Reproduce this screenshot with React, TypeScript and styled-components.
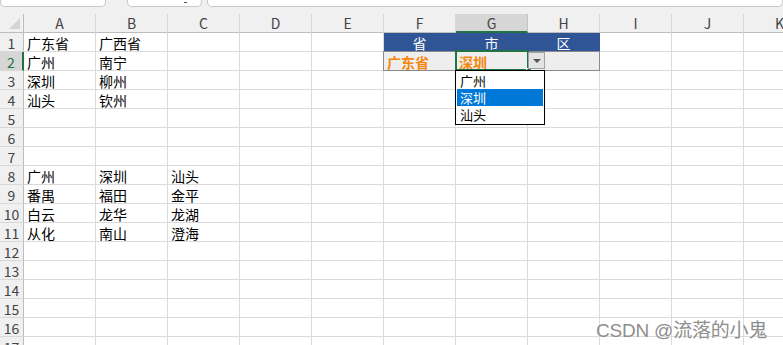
import React from 'react'
import styled, { createGlobalStyle } from 'styled-components'

const GlobalStyle = createGlobalStyle`
  html, body {
    margin: 0;
    padding: 0;
    background: #ffffff;
    overflow: hidden;
  }
  body {
    font-family: "Noto Sans CJK SC", "Noto Sans", sans-serif;
  }
`

const GREEN = '#217346'
const GRID = '#dadada'

const Page = styled.div`
  position: relative;
  width: 783px;
  height: 345px;
  overflow: hidden;
  display: flex;
  flex-direction: column;
`

const TopStrip = styled.div`
  height: 14px;
  flex: none;
  display: flex;
  align-items: flex-start;
  background: #f0f0f0;
`

const StripBox = styled.div<{ $w?: number; $ml?: number }>`
  height: 6px;
  width: ${p => (p.$w ? `${p.$w}px` : 'auto')};
  flex: ${p => (p.$w ? 'none' : '1')};
  margin-left: ${p => p.$ml || 0}px;
  background: #ffffff;
  border: 1px solid #c8c8c8;
  border-top: none;
  border-radius: 0 0 5px 5px;
  position: relative;
`

const Chevron = styled.span`
  position: absolute;
  right: 14px;
  top: 0;
  width: 3px;
  height: 2px;
  border-bottom: 1px solid #555;
`

const Sheet = styled.div`
  position: relative;
  display: grid;
  grid-template-columns: 24px repeat(11, 72px);
  grid-auto-rows: 19px;
  font-size: 14px;
  color: #000;
`

const Corner = styled.div`
  background: #f0f0f0;
  border-right: 1px solid #bdbdbd;
  border-bottom: 1px solid #bdbdbd;
  box-sizing: border-box;
  position: relative;
  &::after {
    content: '';
    position: absolute;
    right: 3px;
    bottom: 3px;
    border-left: 11px solid transparent;
    border-bottom: 11px solid #d4d4d4;
  }
`

const ColHead = styled.div<{ $active?: boolean }>`
  box-sizing: border-box;
  background: ${p => (p.$active ? '#d6d6d6' : '#f0f0f0')};
  border-right: 1px solid ${p => (p.$active ? '#c4c4c4' : '#d8d8d8')};
  border-bottom: ${p => (p.$active ? `2px solid ${GREEN}` : '1px solid #bdbdbd')};
  display: flex;
  align-items: center;
  justify-content: center;
  color: #444;
  font-size: 14px;
  line-height: 1;
  padding-top: ${p => (p.$active ? 1 : 0)}px;
`

const RowHead = styled.div<{ $active?: boolean }>`
  box-sizing: border-box;
  background: ${p => (p.$active ? '#d6d6d6' : '#f0f0f0')};
  border-right: ${p => (p.$active ? `2px solid ${GREEN}` : '1px solid #bdbdbd')};
  border-bottom: 1px solid #d8d8d8;
  display: flex;
  align-items: center;
  justify-content: center;
  color: ${p => (p.$active ? GREEN : '#444')};
  font-size: 14px;
  line-height: 1;
  padding-top: 1px;
`

const Cell = styled.div<{ $bg?: string; $color?: string; $center?: boolean; $bold?: boolean; $line?: string }>`
  box-sizing: border-box;
  background: ${p => p.$bg || '#ffffff'};
  color: ${p => p.$color || '#000'};
  font-weight: ${p => (p.$bold ? 700 : 400)};
  border-right: 1px solid ${p => p.$line || GRID};
  border-bottom: 1px solid ${p => p.$line || GRID};
  padding: 1px 3px 0;
  display: flex;
  align-items: center;
  justify-content: ${p => (p.$center ? 'center' : 'flex-start')};
  white-space: nowrap;
  overflow: hidden;
  line-height: 1;
`

const RangeBorder = styled.div`
  position: absolute;
  left: 383px;
  top: 37px;
  width: 217px;
  height: 20px;
  box-sizing: border-box;
  border: 1px solid #8a8a8a;
  pointer-events: none;
`

const Selection = styled.div`
  position: absolute;
  left: 455px;
  top: 36px;
  width: 74px;
  height: 21px;
  box-sizing: border-box;
  border: 2px solid ${GREEN};
  pointer-events: none;
`

const FillHandle = styled.div`
  position: absolute;
  left: 526px;
  top: 54px;
  width: 4px;
  height: 4px;
  background: ${GREEN};
  border: 1px solid #fff;
`

const DropButton = styled.div`
  position: absolute;
  left: 528px;
  top: 38px;
  width: 17px;
  height: 17px;
  box-sizing: border-box;
  background: #e4e4e4;
  border: 1px solid #a3a3a3;
  display: flex;
  align-items: center;
  justify-content: center;
  &::after {
    content: '';
    border-left: 4px solid transparent;
    border-right: 4px solid transparent;
    border-top: 4px solid #555;
  }
`

const ListBox = styled.div`
  position: absolute;
  left: 455px;
  top: 56px;
  width: 90px;
  box-sizing: border-box;
  border: 1px solid #000;
  background: #fff;
  padding: 1px;
  display: flex;
  flex-direction: column;
`

const ListItem = styled.div<{ $selected?: boolean }>`
  height: 17px;
  display: flex;
  align-items: center;
  overflow: hidden;
  line-height: 1;
  padding-left: 3px;
  font-size: 13px;
  background: ${p => (p.$selected ? '#0078d7' : 'transparent')};
  color: ${p => (p.$selected ? '#fff' : '#000')};
`

const Watermark = styled.div`
  position: absolute;
  left: 596px;
  top: 315px;
  font-family: "Liberation Sans", "Noto Sans CJK SC", sans-serif;
  font-size: 19px;
  color: #8e8e8e;
  white-space: nowrap;
  letter-spacing: -0.2px;
  text-shadow: 0 0 1px #fff;
`

const COLS = ['A', 'B', 'C', 'D', 'E', 'F', 'G', 'H', 'I', 'J', 'K']
const BLUE = '#2f5597'
const ORANGE = '#f5870f'

type CellSpec = { text: string; bg?: string; color?: string; center?: boolean; bold?: boolean; line?: string }

const data: Record<string, CellSpec> = {
  A1: { text: '广东省' }, B1: { text: '广西省' },
  F1: { text: '省', bg: BLUE, color: '#fff', center: true, line: BLUE },
  G1: { text: '市', bg: BLUE, color: '#fff', center: true, line: BLUE },
  H1: { text: '区', bg: BLUE, color: '#fff', center: true, line: BLUE },
  A2: { text: '广州' }, B2: { text: '南宁' },
  F2: { text: '广东省', bg: '#eeeeee', color: ORANGE, bold: true, line: '#eeeeee' },
  G2: { text: '深圳', bg: '#eeeeee', color: ORANGE, bold: true, line: '#eeeeee' },
  H2: { text: '', bg: '#eeeeee', line: '#eeeeee' },
  A3: { text: '深圳' }, B3: { text: '柳州' },
  A4: { text: '汕头' }, B4: { text: '钦州' },
  A8: { text: '广州' }, B8: { text: '深圳' }, C8: { text: '汕头' },
  A9: { text: '番禺' }, B9: { text: '福田' }, C9: { text: '金平' },
  A10: { text: '白云' }, B10: { text: '龙华' }, C10: { text: '龙湖' },
  A11: { text: '从化' }, B11: { text: '南山' }, C11: { text: '澄海' },
}

const ROWS = Array.from({ length: 17 }, (_, i) => i + 1)

const App: React.FC = () => {
  return (
    <>
      <GlobalStyle />
      <Page>
        <TopStrip>
          <StripBox $w={104} />
          <StripBox $w={73} $ml={21}>
            <Chevron />
          </StripBox>
          <StripBox $ml={5} />
        </TopStrip>
        <Sheet>
          <Corner />
          {COLS.map(c => (
            <ColHead key={c} $active={c === 'G'}>{c}</ColHead>
          ))}
          {ROWS.map(r => (
            <React.Fragment key={r}>
              <RowHead $active={r === 2}>{r}</RowHead>
              {COLS.map(c => {
                const spec = data[`${c}${r}`]
                return (
                  <Cell
                    key={c}
                    $bg={spec?.bg}
                    $color={spec?.color}
                    $center={spec?.center}
                    $bold={spec?.bold}
                    $line={spec?.line}
                  >
                    {spec?.text}
                  </Cell>
                )
              })}
            </React.Fragment>
          ))}
          <RangeBorder />
          <Selection />
          <FillHandle />
          <DropButton />
          <ListBox>
            <ListItem>广州</ListItem>
            <ListItem $selected>深圳</ListItem>
            <ListItem>汕头</ListItem>
          </ListBox>
        </Sheet>
        <Watermark>CSDN @流落的小鬼</Watermark>
      </Page>
    </>
  )
}

export default App
